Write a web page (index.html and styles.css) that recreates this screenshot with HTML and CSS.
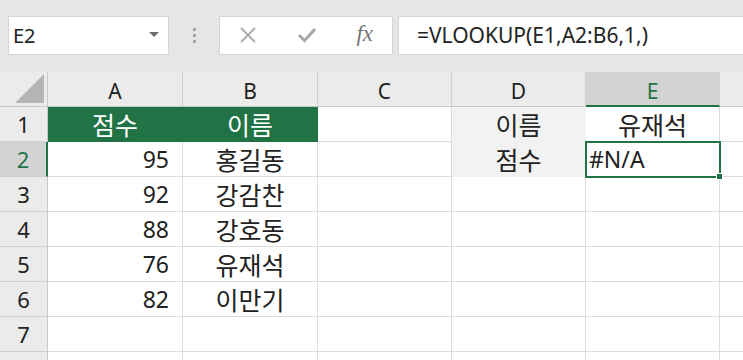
FILE: index.html
```html
<!DOCTYPE html>
<html lang="ko">
<head>
    <meta charset="UTF-8">
    <title>VLOOKUP</title>
    <link rel="stylesheet" href="styles.css">
</head>
<body>
    <div id="toolbar">
        <div id="namebox">
            <span>E2</span>
            <span class="caret"></span>
        </div>
        <div class="grip"><i></i><i></i><i></i></div>
        <div id="fbuttons">
            <svg width="20" height="20" viewBox="0 0 20 20"><path d="M3 3L17 17M17 3L3 17" stroke="#b0b0b0" stroke-width="2" fill="none"/></svg>
            <svg width="22" height="20" viewBox="0 0 22 20"><path d="M3 10L8.5 15.5L19 4" stroke="#a8a8a8" stroke-width="3" fill="none"/></svg>
            <span class="fx">fx</span>
        </div>
        <div id="formula">=VLOOKUP(E1,A2:B6,1,)</div>
    </div>

    <div id="sheet">
        <div class="corner"><span class="tri"></span></div>
        <div class="colh">A</div>
        <div class="colh">B</div>
        <div class="colh">C</div>
        <div class="colh">D</div>
        <div class="colh sel">E</div>
        <div class="colh"></div>

        <div class="rowh">1</div>
        <div class="cell green ko">점수</div>
        <div class="cell green ko">이름</div>
        <div class="cell"></div>
        <div class="cell grey ko">이름</div>
        <div class="cell ctr ko">유재석</div>
        <div class="cell"></div>

        <div class="rowh sel">2</div>
        <div class="cell num">95</div>
        <div class="cell ctr ko">홍길동</div>
        <div class="cell"></div>
        <div class="cell grey ko">점수</div>
        <div class="cell active">#N/A<span class="handle"></span></div>
        <div class="cell"></div>

        <div class="rowh">3</div>
        <div class="cell num">92</div>
        <div class="cell ctr ko">강감찬</div>
        <div class="cell"></div>
        <div class="cell"></div>
        <div class="cell"></div>
        <div class="cell"></div>

        <div class="rowh">4</div>
        <div class="cell num">88</div>
        <div class="cell ctr ko">강호동</div>
        <div class="cell"></div>
        <div class="cell"></div>
        <div class="cell"></div>
        <div class="cell"></div>

        <div class="rowh">5</div>
        <div class="cell num">76</div>
        <div class="cell ctr ko">유재석</div>
        <div class="cell"></div>
        <div class="cell"></div>
        <div class="cell"></div>
        <div class="cell"></div>

        <div class="rowh">6</div>
        <div class="cell num">82</div>
        <div class="cell ctr ko">이만기</div>
        <div class="cell"></div>
        <div class="cell"></div>
        <div class="cell"></div>
        <div class="cell"></div>

        <div class="rowh">7</div>
        <div class="cell"></div>
        <div class="cell"></div>
        <div class="cell"></div>
        <div class="cell"></div>
        <div class="cell"></div>
        <div class="cell"></div>

        <div class="rowh"></div>
        <div class="cell"></div>
        <div class="cell"></div>
        <div class="cell"></div>
        <div class="cell"></div>
        <div class="cell"></div>
        <div class="cell"></div>
    </div>
</body>
</html>
```

FILE: styles.css
```css
* {
    margin: 0;
    padding: 0;
    box-sizing: border-box;
}

body {
    width: 743px;
    height: 360px;
    overflow: hidden;
    background-color: #ffffff;
    font-family: "Noto Sans", "Noto Sans CJK KR", sans-serif;
    color: #222;
}

#toolbar {
    height: 72px;
    background-color: #e6e6e6;
    display: flex;
    align-items: center;
    padding: 0 0 2px 8px;
}

#namebox {
    width: 161px;
    height: 39px;
    background-color: #fff;
    border: 1px solid #d6d6d6;
    display: flex;
    align-items: center;
    justify-content: space-between;
    padding: 0 9px 0 4px;
    font-size: 20px;
}

.caret {
    width: 0;
    height: 0;
    border-left: 5px solid transparent;
    border-right: 5px solid transparent;
    border-top: 5px solid #6e6e6e;
    margin-bottom: 2px;
}

.grip {
    width: 50px;
    display: flex;
    flex-direction: column;
    align-items: center;
    gap: 3px;
}

.grip i {
    width: 3px;
    height: 3px;
    background-color: #a6a6a6;
}

#fbuttons {
    width: 174px;
    height: 39px;
    background-color: #fff;
    border: 1px solid #d6d6d6;
    display: flex;
    align-items: center;
    justify-content: space-between;
    padding: 0 19px 0 18px;
}

.fx {
    font-family: "Liberation Serif", serif;
    font-style: italic;
    font-size: 23px;
    color: #767676;
    padding-bottom: 2px;
}

#formula {
    flex: 1;
    height: 39px;
    margin-left: 5px;
    background-color: #fff;
    border: 1px solid #d6d6d6;
    border-right: none;
    display: flex;
    align-items: center;
    padding-left: 18px;
    font-size: 21px;
    white-space: nowrap;
}

#sheet {
    display: grid;
    grid-template-columns: 48px 135px 135px 134px 134px 134px 134px;
    grid-template-rows: 35px repeat(8, 35px);
    height: 288px;
    overflow: hidden;
    font-size: 23px;
}

.corner {
    background-color: #ebebeb;
    border-right: 1px solid #c8c8c8;
    border-bottom: 1px solid #c8c8c8;
    display: flex;
    align-items: flex-end;
    justify-content: flex-end;
    padding: 0 3px 3px 0;
}

.tri {
    width: 0;
    height: 0;
    border-left: 29px solid transparent;
    border-bottom: 29px solid #b5b5b5;
}

.colh {
    background-color: #ebebeb;
    border-right: 1px solid #d0d0d0;
    border-bottom: 1px solid #c8c8c8;
    display: flex;
    align-items: center;
    justify-content: center;
    padding-top: 3px;
    font-size: 21px;
}

.colh.sel {
    background-color: #d3d3d3;
    color: #217346;
    border-bottom: 2px solid #217346;
    padding-top: 4px;
}

.rowh {
    background-color: #ebebeb;
    border-right: 1px solid #c8c8c8;
    border-bottom: 1px solid #d0d0d0;
    display: flex;
    align-items: center;
    justify-content: center;
    font-size: 22px;
}

.rowh.sel {
    background-color: #d3d3d3;
    color: #217346;
    border-right: 2px solid #217346;
}

.cell {
    border-right: 1px solid #dcdcdc;
    border-bottom: 1px solid #dcdcdc;
    display: flex;
    align-items: center;
    white-space: nowrap;
}

.ko {
    font-size: 25px;
}

.num {
    justify-content: flex-end;
    padding-right: 13px;
}

.ctr, .green, .grey {
    justify-content: center;
}

.green {
    background-color: #217346;
    border-color: #217346;
    color: #fff;
}

.grey {
    background-color: #f2f2f2;
    border-color: #f2f2f2;
}

.active {
    position: relative;
    padding-left: 3px;
    outline: 2px solid #217346;
    outline-offset: -1px;
}

.handle {
    position: absolute;
    right: -4px;
    bottom: -4px;
    width: 7px;
    height: 7px;
    background-color: #217346;
    border: 1px solid #fff;
}
```
